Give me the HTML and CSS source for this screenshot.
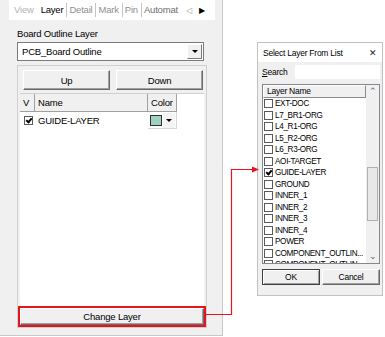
FILE: index.html
```html
<!DOCTYPE html>
<html lang="en">
<head>
    <meta charset="UTF-8">
    <title>Change Layer</title>
    <link rel="stylesheet" href="styles.css">
</head>
<body>
    <div class="panel">
        <div class="tabs">
            <span class="tab dim">View</span>
            <span class="tab active">Layer</span>
            <span class="tab sep">Detail</span>
            <span class="tab sep">Mark</span>
            <span class="tab sep">Pin</span>
            <span class="tab sep auto">Automat</span>
            <span class="nav left">&#9665;</span>
            <span class="nav right">&#9654;</span>
        </div>
        <div class="content">
            <div class="label">Board Outline Layer</div>
            <div class="combo">
                <span class="combo-text">PCB_Board Outline</span>
                <span class="combo-btn"><i class="down-tri"></i></span>
            </div>
            <div class="group">
                <div class="btn-row">
                    <div class="btn">Up</div>
                    <div class="btn">Down</div>
                </div>
                <div class="grid">
                    <div class="grid-head">
                        <div class="hcell c-v">V</div>
                        <div class="hcell c-name">Name</div>
                        <div class="hcell c-color">Color</div>
                    </div>
                    <div class="grid-row">
                        <div class="cell c-v"><span class="chk on"></span></div>
                        <div class="cell c-name">GUIDE-LAYER</div>
                        <div class="cell c-color">
                            <span class="swatch"></span>
                            <span class="mini-btn"><i class="down-tri"></i></span>
                        </div>
                    </div>
                </div>
                <div class="btn wide marked">Change Layer</div>
            </div>
        </div>
    </div>

    <div class="dialog">
        <div class="title-bar">
            <span>Select Layer From List</span>
            <span class="close">&#10005;</span>
        </div>
        <div class="search-row">
            <span class="search-label"><u>S</u>earch</span>
            <span class="search-box"></span>
        </div>
        <div class="listbox">
            <div class="list-main">
                <div class="list-head">Layer Name</div>
                <div class="list-row"><span class="chk"></span>EXT-DOC</div>
                <div class="list-row"><span class="chk"></span>L7_BR1-ORG</div>
                <div class="list-row"><span class="chk"></span>L4_R1-ORG</div>
                <div class="list-row"><span class="chk"></span>L5_R2-ORG</div>
                <div class="list-row"><span class="chk"></span>L6_R3-ORG</div>
                <div class="list-row"><span class="chk"></span>AOI-TARGET</div>
                <div class="list-row"><span class="chk on"></span>GUIDE-LAYER</div>
                <div class="list-row"><span class="chk"></span>GROUND</div>
                <div class="list-row"><span class="chk"></span>INNER_1</div>
                <div class="list-row"><span class="chk"></span>INNER_2</div>
                <div class="list-row"><span class="chk"></span>INNER_3</div>
                <div class="list-row"><span class="chk"></span>INNER_4</div>
                <div class="list-row"><span class="chk"></span>POWER</div>
                <div class="list-row"><span class="chk"></span>COMPONENT_OUTLIN...</div>
                <div class="list-row"><span class="chk"></span>COMPONENT_OUTLIN...</div>
            </div>
            <div class="scrollbar">
                <span class="arrow">&#8963;</span>
                <span class="track"><span class="thumb"></span></span>
                <span class="arrow">&#8964;</span>
            </div>
        </div>
        <div class="dlg-buttons">
            <div class="btn default">OK</div>
            <div class="btn">Cancel</div>
        </div>
    </div>

    <svg class="connector" width="385" height="337" viewBox="0 0 385 337">
        <polyline points="204,314.5 231.5,314.5 231.5,169.5 253,169.5" fill="none" stroke="#e8141b" stroke-width="1.2"/>
        <polygon points="252,166.5 259,169.5 252,172.5" fill="#e8141b"/>
    </svg>
</body>
</html>
```

FILE: styles.css
```css
* {
    box-sizing: border-box;
}
body {
    margin: 0;
    width: 385px;
    height: 337px;
    position: relative;
    overflow: hidden;
    background: #fff;
    font-family: 'Liberation Sans', Arial, sans-serif;
    font-size: 9.5px;
    letter-spacing: -0.2px;
    color: #000;
}
.panel {
    width: 223px;
    height: 336px;
    background: #f0f0f0;
    border-right: 1px solid #c8c8c8;
    border-bottom: 1px solid #c8c8c8;
}
.tabs {
    margin-left: 9px;
    width: 206px;
    height: 20px;
    background: #fff;
    display: flex;
    align-items: center;
    padding-left: 3px;
    white-space: nowrap;
}
.tab {
    padding: 0 2px;
    line-height: 14px;
}
.tab.dim {
    color: #b4b4b4;
    margin-right: 3px;
}
.tab.active {
    color: #000;
}
.tab.sep {
    color: #8f8f8f;
    border-left: 1px solid #c4c4c4;
    margin-left: 1px;
}
.tab.auto {
    color: #6e6e6e;
    width: 40px;
    overflow: hidden;
}
.nav {
    font-size: 8px;
    color: #9a9a9a;
    margin-left: 5px;
}
.nav.right {
    color: #000;
    margin-left: 7px;
}
.content {
    padding: 8px 0 0 17px;
}
.label {
    height: 14px;
    line-height: 12px;
}
.combo {
    width: 187px;
    height: 19px;
    background: #fff;
    border: 1px solid #7a7a7a;
    display: flex;
    align-items: center;
    padding: 1px;
}
.combo-text {
    flex: 1;
    padding-left: 3px;
}
.combo-btn {
    width: 15px;
    height: 15px;
    background: #f0f0f0;
    border: 1px solid;
    border-color: #fff #7a7a7a #7a7a7a #fff;
    display: flex;
    align-items: center;
    justify-content: center;
}
.down-tri {
    width: 0;
    height: 0;
    border-left: 3px solid transparent;
    border-right: 3px solid transparent;
    border-top: 3px solid #000;
}
.group {
    margin-top: 4px;
    width: 190px;
    height: 263px;
    border: 1px solid #d0d0d0;
    padding: 4px 2px 2px 2px;
    display: flex;
    flex-direction: column;
}
.btn-row {
    display: flex;
    justify-content: space-between;
    padding: 0 1px 0 3px;
}
.btn {
    height: 20px;
    background: #f0f0f0;
    border: 1px solid;
    border-color: #fff #696969 #696969 #fff;
    box-shadow: inset -1px -1px 0 #a0a0a0;
    display: flex;
    align-items: center;
    justify-content: center;
}
.btn-row .btn {
    width: 87px;
}
.grid {
    flex: 1;
    margin-top: 3px;
    background: #fff;
    border-top: 1px solid #d0d0d0;
}
.grid-head, .grid-row {
    display: flex;
}
.grid-head {
    height: 18px;
}
.hcell {
    background: #f0f0f0;
    border-right: 1px solid #a0a0a0;
    border-bottom: 1px solid #a0a0a0;
    display: flex;
    align-items: center;
    padding-left: 3px;
}
.c-v {
    width: 15px;
}
.c-name {
    width: 113px;
}
.c-color {
    width: 29px;
}
.grid-row {
    height: 17px;
}
.cell {
    display: flex;
    align-items: center;
    padding-left: 3px;
}
.cell.c-color {
    border-right: 1px solid #d8d8d8;
    border-bottom: 1px solid #d8d8d8;
    padding-left: 2px;
    gap: 1px;
}
.swatch {
    width: 12px;
    height: 11px;
    background: #9fd1c3;
    border: 1px solid #303030;
}
.mini-btn {
    width: 12px;
    height: 15px;
    display: flex;
    align-items: center;
    justify-content: center;
    background: #f4f4f4;
}
.chk {
    width: 9px;
    height: 9px;
    border: 1px solid #5a5a5a;
    background: #fff;
    position: relative;
    flex: none;
}
.chk.on::after {
    content: '';
    position: absolute;
    left: 2px;
    top: 0;
    width: 2px;
    height: 4px;
    border: solid #000;
    border-width: 0 2px 2px 0;
    transform: rotate(40deg);
}
.grid-row .chk {
    margin-left: 1px;
}
.btn.wide {
    margin-top: 2px;
    height: 17px;
}
.btn.marked {
    outline: 2px solid #e8141b;
    outline-offset: 0;
    width: 184px;
}
.dialog {
    position: absolute;
    left: 257px;
    top: 42px;
    width: 126px;
    height: 254px;
    background: #f0f0f0;
    border: 1px solid #c2c2c2;
    font-size: 8.5px;
    letter-spacing: -0.25px;
    display: flex;
    flex-direction: column;
}
.title-bar {
    height: 19px;
    background: #fff;
    display: flex;
    align-items: center;
    justify-content: space-between;
    padding: 0 5px 0 5px;
}
.close {
    font-size: 9px;
    color: #222;
}
.search-row {
    display: flex;
    align-items: center;
    padding: 2px 2px 0 4px;
    height: 17px;
}
.search-label {
    width: 33px;
}
.search-box {
    flex: 1;
    height: 14px;
    background: #fff;
}
.listbox {
    margin: 5px 2px 0 4px;
    height: 180px;
    border: 1px solid #828790;
    background: #fff;
    display: flex;
    overflow: hidden;
}
.list-main {
    flex: 1;
    min-width: 0;
}
.list-head {
    height: 13px;
    background: #f0f0f0;
    border: 1px solid #8c8c8c;
    border-top-color: #fff;
    border-left-color: #fff;
    padding-left: 3px;
    line-height: 11px;
}
.list-row {
    height: 11.5px;
    display: flex;
    align-items: center;
    padding-left: 1px;
    gap: 2px;
    font-size: 8.2px;
    letter-spacing: -0.35px;
    white-space: nowrap;
    overflow: hidden;
}
.scrollbar {
    width: 13px;
    flex: none;
    background: #f0f0f0;
    display: flex;
    flex-direction: column;
    align-items: center;
}
.arrow {
    height: 13px;
    font-size: 9px;
    line-height: 13px;
    color: #606060;
}
.track {
    flex: 1;
    width: 100%;
    display: flex;
    flex-direction: column;
    padding-top: 69px;
}
.thumb {
    margin: 0 1px;
    height: 54px;
    background: #e8e8e8;
    border: 1px solid #b0b0b0;
}
.dlg-buttons {
    display: flex;
    gap: 2px;
    padding: 5px 2px 0 4px;
}
.dlg-buttons .btn {
    flex: 1;
    height: 16px;
}
.btn.default {
    border: 1px solid #404040;
    box-shadow: inset 1px 1px 0 #fff, inset -1px -1px 0 #a0a0a0;
}
.connector {
    position: absolute;
    left: 0;
    top: 0;
    pointer-events: none;
}
```
